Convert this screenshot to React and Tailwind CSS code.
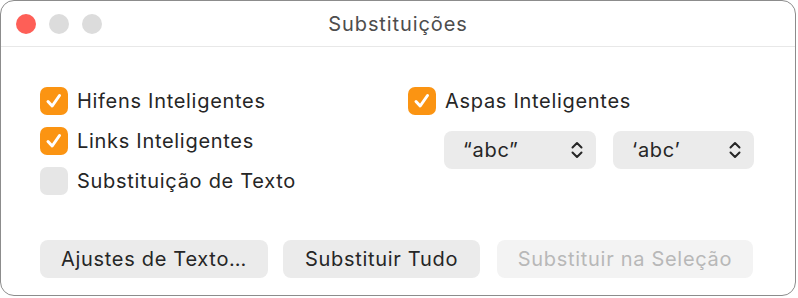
import React from "react";

function Check({ on }) {
  return (
    <div
      className={
        "w-[28px] h-[28px] rounded-[7px] flex items-center justify-center shrink-0 " +
        (on ? "bg-[#fb9412]" : "bg-[#e6e6e6]")
      }
    >
      {on && (
        <svg width="20" height="20" viewBox="0 0 20 20" fill="none">
          <path
            d="M4 10.5 L8.2 15 L15.5 4.5"
            stroke="white"
            strokeWidth="3"
            strokeLinecap="round"
            strokeLinejoin="round"
          />
        </svg>
      )}
    </div>
  );
}

function Row({ on, label }) {
  return (
    <div className="flex items-center gap-[9px] h-[28px]">
      <Check on={on} />
      <span className="text-[20px] tracking-[0.7px] text-[#262626]">{label}</span>
    </div>
  );
}

function Chevrons() {
  return (
    <svg width="14" height="20" viewBox="0 0 14 20" fill="none">
      <path d="M2.5 7.5 L7 3 L11.5 7.5" stroke="#262626" strokeWidth="2" strokeLinecap="round" strokeLinejoin="round" />
      <path d="M2.5 12.5 L7 17 L11.5 12.5" stroke="#262626" strokeWidth="2" strokeLinecap="round" strokeLinejoin="round" />
    </svg>
  );
}

function Popup({ label, width }) {
  return (
    <div
      className={
        "h-[38px] rounded-[8px] bg-[#ebebeb] flex items-center justify-between pl-[19px] pr-[12px] " + width
      }
    >
      <span className="text-[20px] tracking-[0.7px] text-[#262626]">{label}</span>
      <Chevrons />
    </div>
  );
}

export default function App() {
  return (
    <div className="w-[798px] h-[298px] bg-white" style={{ fontFamily: "Inter, 'Liberation Sans', sans-serif" }}>
      <div className="w-[796px] h-[296px] border border-[#8c8c8c] rounded-[14px] bg-white overflow-hidden flex flex-col">
        <div className="h-[46px] border-b border-[#e8e8e8] flex items-center relative shrink-0">
          <div className="flex items-center gap-[13px] ml-[15px]">
            <div className="w-[20px] h-[20px] rounded-full bg-[#fe5f57]" />
            <div className="w-[20px] h-[20px] rounded-full bg-[#dcdcdc]" />
            <div className="w-[20px] h-[20px] rounded-full bg-[#dcdcdc]" />
          </div>
          <div className="absolute inset-0 flex items-center justify-center text-[20px] tracking-[0.9px] text-[#4d4d4d]">
            Substituições
          </div>
        </div>

        <div className="flex pl-[39px] pt-[40px]">
          <div className="w-[368px] flex flex-col gap-[12px]">
            <Row on label="Hifens Inteligentes" />
            <Row on label="Links Inteligentes" />
            <Row on={false} label="Substituição de Texto" />
          </div>
          <div className="flex flex-col">
            <Row on label="Aspas Inteligentes" />
            <div className="flex gap-[17px] ml-[36px] mt-[16px]">
              <Popup label="“abc”" width="w-[152px]" />
              <Popup label="‘abc’" width="w-[141px]" />
            </div>
          </div>
        </div>

        <div className="flex gap-[15px] pl-[39px] mt-[45px]">
          <div className="h-[38px] w-[228px] rounded-[8px] bg-[#ebebeb] flex items-center justify-center text-[20px] tracking-[0.7px] text-[#262626]">
            Ajustes de Texto…
          </div>
          <div className="h-[38px] w-[197px] rounded-[8px] bg-[#ebebeb] flex items-center justify-center text-[20px] tracking-[0.7px] text-[#262626]">
            Substituir Tudo
          </div>
          <div className="h-[38px] w-[256px] ml-[2px] rounded-[8px] bg-[#f3f3f3] flex items-center justify-center text-[20px] tracking-[0.7px] text-[#b8b8b8]">
            Substituir na Seleção
          </div>
        </div>
      </div>
    </div>
  );
}
